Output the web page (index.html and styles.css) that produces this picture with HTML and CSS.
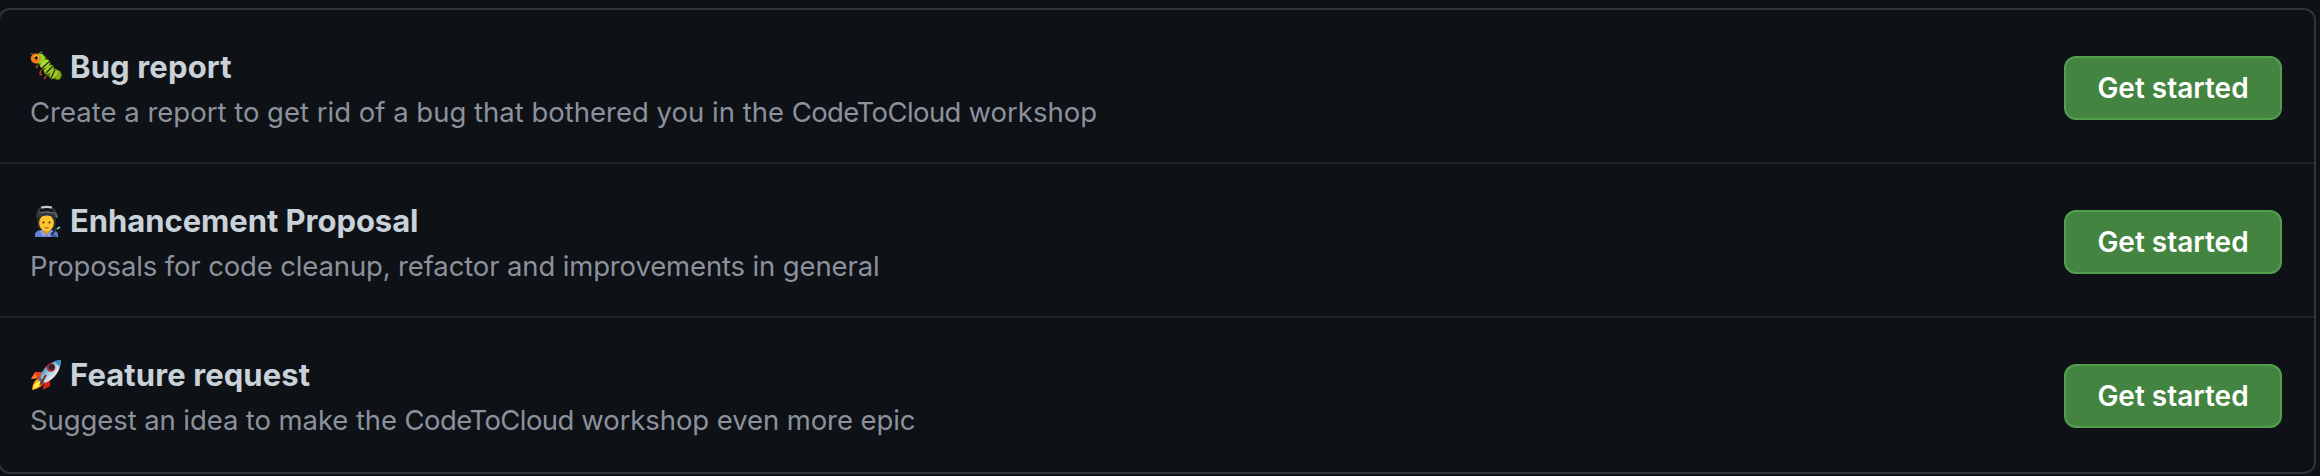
FILE: index.html
```html
<!DOCTYPE html>
<html lang="en">
<head>
<meta charset="utf-8">
<title>Choose a template</title>
<link rel="stylesheet" href="styles.css">
</head>
<body>
<main class="templates">
  <section class="row">
    <div class="info">
      <h2 class="title title-bug">
        <svg class="emoji" viewBox="0 0 32 32">
          <g fill="none" stroke="#777b70" stroke-width="1"><path d="M4 4Q2 1 0.5 3M9 3Q10 0 12.5 1.5"/></g>
          <path d="M8 14l-2 3M11 19l-1 4 2 1M16 25l-2 3" stroke="#b83a20" stroke-width="1.6" fill="none"/>
          <path d="M8 8L12 9L16 15L20 21L27 24" stroke="#4b6418" stroke-width="10" stroke-linecap="round" stroke-linejoin="round" fill="none"/>
          <ellipse cx="28" cy="24" rx="2.800" ry="4.600" fill="#84ae16"/>
          <ellipse cx="23.500" cy="23" rx="3.300" ry="5.200" transform="rotate(32 23.500 23)" fill="#a3ce22"/>
          <ellipse cx="19" cy="18.500" rx="3.400" ry="5.600" transform="rotate(50 19 18.500)" fill="#9fcb1e"/>
          <ellipse cx="15" cy="13" rx="5.400" ry="3.500" transform="rotate(-35 15 13)" fill="#b3dd2c"/>
          <path d="M12 17l8-7M16 22l7-7M21 27l4-8" stroke="#283415" stroke-width="1.500"/>
          <circle cx="10" cy="7.500" r="5" fill="#8ed525"/>
          <circle cx="5.800" cy="7.500" r="5" fill="#f77b16"/>
          <circle cx="6.500" cy="6.500" r="2.600" fill="#ffbc35"/>
          <circle cx="6.200" cy="7" r="1.700" fill="#17110b"/>
        </svg>Bug report</h2>
      <p class="desc desc-bug">Create a report to get rid of a bug that bothered you in the <span class="name">CodeToCloud</span> workshop</p>
    </div>
    <button class="start" type="button">Get started</button>
  </section>
  <section class="row">
    <div class="info">
      <h2 class="title title-enhance">
        <svg class="emoji" viewBox="0 0 32 32">
          <path d="M5 32v-3q1-4 7-4h9q6 0 7 4v3z" fill="#667fd0"/>
          <path d="M12 24h9l-4.500 6z" fill="#e69a18"/>
          <path d="M12 25l4 5-3 2-3-6M21 25l-4 5 3 2 3-6" fill="#8da3e7"/>
          <path d="M7 11h19v9q-1 4-4 4H11q-4-1-4-4z" fill="#272a2e"/>
          <ellipse cx="16.500" cy="18" rx="7.400" ry="8.500" fill="#ffc52c"/>
          <path d="M6 13Q6 3 11 2h11q5 2 5 11l-3-1q-7-3-14 0z" fill="#32363a"/>
          <path d="M10 4q6-2 13 0v3q-7-2-13 0z" fill="#15181b"/>
          <path d="M11 1.500q6-1.500 11 0v2q-5-1-11 0z" fill="#c5cbd0"/>
          <path d="M9 8q7-2 15 0" stroke="#6d747a" fill="none"/>
          <path d="M24 8q3 1 3 5" stroke="#41647b" stroke-width="2" fill="none"/>
          <circle cx="13.500" cy="17.500" r="1.100" fill="#50330c"/>
          <circle cx="19.500" cy="17.500" r="1.100" fill="#50330c"/>
          <path d="M14.500 22.500q2 1 4 0" stroke="#b56c0d" stroke-width="1.200" fill="none"/>
          <path d="M21 30l5-6 4-2" stroke="#26343e" stroke-width="2.200" fill="none"/>
          <path d="M27 24l3-2" stroke="#a5d7d8" stroke-width="1.500"/>
          <path d="M23 29l4 1-1 2h-5z" fill="#425ba9"/>
        </svg>Enhancement Proposal</h2>
      <p class="desc desc-enhance">Proposals for code cleanup, refactor and improvements in general</p>
    </div>
    <button class="start" type="button">Get started</button>
  </section>
  <section class="row">
    <div class="info">
      <h2 class="title title-feature">
        <svg class="emoji" viewBox="0 0 32 32">
          <defs><linearGradient id="hull" x1="0" y1="0" x2="1" y2="1"><stop offset="0.200" stop-color="#4279a8"/><stop offset="0.480" stop-color="#9bc8e5"/><stop offset="0.650" stop-color="#e2e6e8"/><stop offset="1" stop-color="#777f86"/></linearGradient></defs>
          <path d="M13 13H5L1 20l9-1z" fill="#e54222"/>
          <path d="M5 14l-4 6 6-1z" fill="#ff7b20"/>
          <path d="M20 19v8l-7 4 1-9z" fill="#db211c"/>
          <path d="M11 19q-8 0-9 12 9-1 13-9z" fill="#ff9b19"/>
          <path d="M10 22q-6 1-7 8 7-2 9-7z" fill="#fff04f"/>
          <path d="M10 19Q13 4 31 1 30 18 15 24z" fill="url(#hull)"/>
          <path d="M24 2q4-1 7-1 0 4-1 7z" fill="#3d8fc8"/>
          <path d="M10 18l5 6-3 1-4-5z" fill="#497496"/>
          <circle cx="21" cy="8.500" r="4.300" fill="#b42122"/>
          <circle cx="21.500" cy="8" r="2.700" fill="#202733"/>
          <path d="M16 16l-6 10" stroke="#82231c" stroke-width="1.800"/>
        </svg>Feature request</h2>
      <p class="desc desc-feature">Suggest an idea to make the <span class="name">CodeToCloud</span> workshop even more epic</p>
    </div>
    <button class="start" type="button">Get started</button>
  </section>
</main>
</body>
</html>
```
FILE: styles.css
```css
* { box-sizing: border-box; }
html { height: 476px; background: #0e1116; }
body {
  margin: 0;
  height: 476px;
  padding-top: 8px;
  overflow: hidden;
  background: #0e1116;
  font-family: Inter, "Liberation Sans", sans-serif;
}
.templates {
  width: 2318px;
  height: 466px;
  margin-left: -2px;
  border: 2px solid #303439;
  border-radius: 12px;
}
.row {
  display: flex;
  justify-content: space-between;
  align-items: flex-start;
  height: 154px;
  padding: 33px 32px 0 30px;
  border-bottom: 2px solid #212529;
}
.row:last-child { border-bottom: 0; }
.title {
  display: flex;
  align-items: center;
  gap: 8px;
  height: 48px;
  margin: 0;
  font-size: 31px;
  font-weight: 700;
  line-height: 48px;
  color: #c9d1d9;
  white-space: nowrap;
}
.title-bug { letter-spacing: 0.15px; }
.title-enhance { letter-spacing: -0.05px; }
.title-feature { letter-spacing: 0.1px; }
.emoji {
  width: 32px;
  height: 32px;
  flex: none;
}
.desc {
  margin: 0;
  font-size: 27.5px;
  line-height: 42px;
  color: #8b929c;
  white-space: nowrap;
}
.desc-bug { letter-spacing: 0; }
.desc-enhance { letter-spacing: -0.14px; }
.desc-feature { letter-spacing: -0.09px; }
.name { letter-spacing: -0.6px; }
.start {
  width: 218px;
  height: 64px;
  margin-top: 13px;
  padding: 0;
  border: 2px solid #529f4e;
  border-radius: 12px;
  background: #438440;
  color: #fff;
  font: 600 28px/60px Inter, "Liberation Sans", sans-serif;
  white-space: nowrap;
}
```
